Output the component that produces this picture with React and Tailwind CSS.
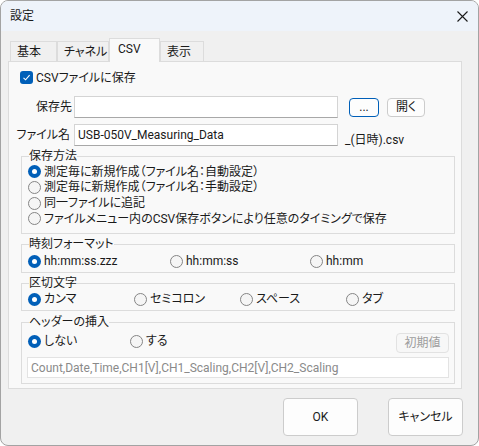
import React from 'react'

const font = { fontFamily: 'Roboto, "Noto Sans CJK JP", sans-serif' }

function Radio({ checked }) {
  if (checked) {
    return (
      <span className="w-[13px] h-[13px] rounded-full bg-[#005fb8] flex items-center justify-center shrink-0">
        <span className="w-[5px] h-[5px] rounded-full bg-white" />
      </span>
    )
  }
  return <span className="w-[13px] h-[13px] rounded-full border border-[#858585] bg-[#f5f5f5] shrink-0" />
}

function RadioItem({ checked, label, className = '' }) {
  return (
    <div className={`flex items-center gap-[3px] ${className}`}>
      <Radio checked={checked} />
      <span className="leading-[14px] whitespace-nowrap">{label}</span>
    </div>
  )
}

function Group({ title, className = '', children }) {
  return (
    <div className={`relative ml-[12px] w-[434px] border border-[#dcdcdc] ${className}`}>
      <span className="absolute -top-[8px] left-[7px] leading-[14px] bg-[#f9f9f9] whitespace-nowrap">{title}</span>
      {children}
    </div>
  )
}

function Tab({ label, selected, width }) {
  if (selected) {
    return (
      <div
        className={`${width} h-[24px] -mb-[1px] relative z-10 bg-[#f9f9f9] border-t border-l border-r border-[#dcdcdc] flex items-start pt-[3px] pl-[8px] leading-[14px] whitespace-nowrap`}
      >
        {label}
      </div>
    )
  }
  return (
    <div className={`${width} h-[20px] bg-[#f0f0f0] border-t border-l border-r border-[#dcdcdc] flex items-center pl-[6px] leading-[14px] whitespace-nowrap`}>
      {label}
    </div>
  )
}

export default function App() {
  return (
    <div className="w-[479px] h-[446px] bg-white" style={font}>
      <div className="w-[479px] h-[446px] rounded-[8px] border border-[#a3a3a3] overflow-hidden bg-[#f0f0f0] text-[12px] text-[#1a1a1a] flex flex-col [font-feature-settings:'palt']">
        {/* title bar */}
        <div className="h-[30px] bg-[#eef3fa] flex items-center justify-between pl-[9px] pr-[9px] shrink-0">
          <span className="leading-[14px]">設定</span>
          <svg width="11" height="11" viewBox="0 0 11 11" className="mr-[1px]">
            <path d="M0.5 0.5 L10.5 10.5 M10.5 0.5 L0.5 10.5" stroke="#1a1a1a" strokeWidth="1.1" />
          </svg>
        </div>

        {/* tabs */}
        <div className="mt-[7px] h-[23px] flex items-end pl-[9px]">
          <Tab label="基本" width="w-[47px]" />
          <Tab label="チャネル" width="w-[52px]" />
          <Tab label="CSV" width="w-[51px]" selected />
          <Tab label="表示" width="w-[44px]" />
        </div>

        {/* panel */}
        <div className="ml-[7px] w-[454px] h-[328px] border border-[#dcdcdc] bg-[#f9f9f9] flex flex-col">
          <div className="mt-[9px] ml-[11px] flex items-center gap-[3px] h-[13px]">
            <span className="w-[13px] h-[13px] rounded-[3px] bg-[#005fb8] flex items-center justify-center">
              <svg width="9" height="9" viewBox="0 0 9 9">
                <path d="M1.5 4.8 L3.6 6.8 L7.6 2.2" fill="none" stroke="white" strokeWidth="1.1" />
              </svg>
            </span>
            <span className="leading-[14px]">CSVファイルに保存</span>
          </div>

          <div className="mt-[12px] h-[22px] flex items-center">
            <span className="w-[63px] text-right leading-[14px] whitespace-nowrap">保存先</span>
            <div className="ml-[2px] w-[264px] h-[22px] bg-white border border-[#d4d4d4] border-b-[#a8a8a8]" />
            <button className="ml-[11px] w-[30px] h-[19px] rounded-[4px] border border-[#005fb8] bg-[#fdfdfd] flex items-end justify-center leading-[14px] pb-[2px]">
              ...
            </button>
            <button className="ml-[8px] w-[38px] h-[19px] rounded-[4px] border border-[#cccccc] bg-[#fdfdfd] flex items-center justify-center leading-[14px]">
              開く
            </button>
          </div>

          <div className="mt-[6px] h-[22px] flex items-center">
            <span className="w-[61px] text-right leading-[14px] whitespace-nowrap">ファイル名</span>
            <div className="ml-[4px] w-[264px] h-[22px] bg-white border border-[#d4d4d4] border-b-[#a8a8a8] flex items-center pl-[3px] leading-[14px]">
              USB-050V_Measuring_Data
            </div>
            <span className="ml-[7px] self-end -mb-[1px] leading-[14px]">_(日時).csv</span>
          </div>

          <Group title="保存方法" className="mt-[10px] h-[78px] pt-[7px] pl-[6px]">
            <RadioItem checked label="測定毎に新規作成（ファイル名：自動設定）" className="h-[15.67px]" />
            <RadioItem label="測定毎に新規作成（ファイル名：手動設定）" className="h-[15.67px]" />
            <RadioItem label="同一ファイルに追記" className="h-[15.67px]" />
            <RadioItem label="ファイルメニュー内のCSV保存ボタンにより任意のタイミングで保存" className="h-[15.67px]" />
          </Group>

          <Group title="時刻フォーマット" className="mt-[10px] h-[29px] pt-[8px] pl-[6px]">
            <div className="flex h-[16px]">
              <RadioItem checked label="hh:mm:ss.zzz" className="w-[142px]" />
              <RadioItem label="hh:mm:ss" className="w-[140px]" />
              <RadioItem label="hh:mm" />
            </div>
          </Group>

          <Group title="区切文字" className="mt-[10px] h-[28px] pt-[7px] pl-[6px]">
            <div className="flex h-[16px]">
              <RadioItem checked label="カンマ" className="w-[106px]" />
              <RadioItem label="セミコロン" className="w-[106px]" />
              <RadioItem label="スペース" className="w-[106px]" />
              <RadioItem label="タブ" />
            </div>
          </Group>

          <Group title="ヘッダーの挿入" className="mt-[11px] h-[62px] pt-[10px] pl-[5px]">
            <div className="flex items-start h-[20px]">
              <div className="flex h-[16px] ml-[1px]">
                <RadioItem checked label="しない" className="w-[102px]" />
                <RadioItem label="する" />
              </div>
              <button className="ml-auto mr-[5px] w-[53px] h-[20px] rounded-[4px] border border-[#e2e2e2] bg-[#f7f7f7] text-[#9d9d9d] flex items-center justify-center leading-[14px]">
                初期値
              </button>
            </div>
            <div className="mt-[4px] w-[422px] h-[21px] bg-white border border-[#e3e3e3] flex items-center pl-[3px] text-[#8a8a8a] leading-[14px]">
              Count,Date,Time,CH1[V],CH1_Scaling,CH2[V],CH2_Scaling
            </div>
          </Group>
        </div>

        {/* footer buttons */}
        <div className="mt-[9px] flex justify-end pr-[15px] gap-[30px]">
          <button className="w-[75px] h-[38px] rounded-[4px] border border-[#cccccc] bg-[#fdfdfd] leading-[14px]">OK</button>
          <button className="w-[75px] h-[38px] rounded-[4px] border border-[#cccccc] bg-[#fdfdfd] leading-[14px]">キャンセル</button>
        </div>
      </div>
    </div>
  )
}
